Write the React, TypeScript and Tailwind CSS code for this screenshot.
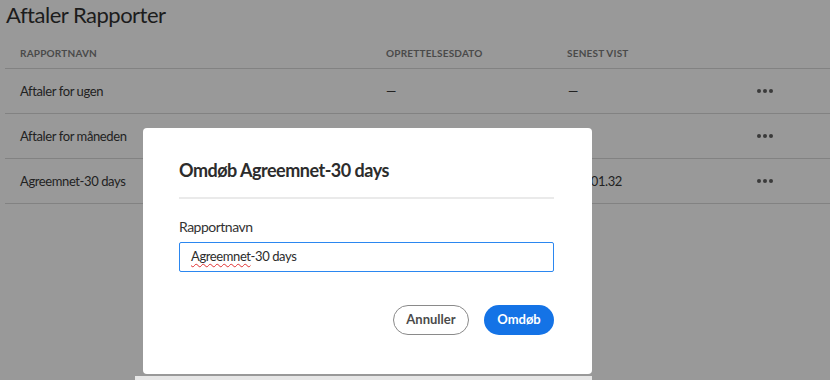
import React from "react";

function Dots() {
  return (
    <div className="flex gap-[2px]">
      <span className="w-[4px] h-[4px] rounded-full bg-[#3a3a3a]" />
      <span className="w-[4px] h-[4px] rounded-full bg-[#3a3a3a]" />
      <span className="w-[4px] h-[4px] rounded-full bg-[#3a3a3a]" />
    </div>
  );
}

function Row({ name, created, seen, seenRight }: { name: string; created: string; seen: string; seenRight?: boolean }) {
  return (
    <div className="h-[45px] flex items-center border-b border-[#828282] text-[13px] text-[#222222] tracking-[-0.4px]">
      <div className="w-[381px] pl-[15px] pt-[2px]">{name}</div>
      <div className="w-[181px] pt-[2px]">{created}</div>
      <div
        className={
          seenRight
            ? "w-[190px] pt-[2px] whitespace-nowrap flex justify-end pr-[135px]"
            : "w-[190px] pl-[1px] pt-[2px] whitespace-nowrap"
        }
      >
        <span className="shrink-0">{seen}</span>
      </div>
      <Dots />
    </div>
  );
}

export default function App() {
  return (
    <div
      className="relative w-[830px] h-[380px] overflow-hidden bg-[#999999]"
      style={{ fontFamily: 'Lato, "Open Sans", sans-serif' }}
    >
      <div className="pl-[5px]">
        <h1 className="text-[22px] leading-[30px] text-[#1c1c1c] pl-[1px] tracking-[-0.5px]">Aftaler Rapporter</h1>
        <div className="mt-[9px] h-[30px] flex items-center border-b border-[#828282] text-[10px] font-bold text-[#4a4a4a] tracking-[0.2px]">
          <div className="w-[381px] pl-[15px]">RAPPORTNAVN</div>
          <div className="w-[181px]">OPRETTELSESDATO</div>
          <div>SENEST VIST</div>
        </div>
        <Row name="Aftaler for ugen" created="—" seen="—" />
        <Row name="Aftaler for måneden" created="" seen="" />
        <Row name="Agreemnet-30 days" created="" seen="19. feb. 2021, 01.32" seenRight />
      </div>

      <div className="absolute left-[135px] top-[376px] w-[457px] h-[4px] bg-[#e6e6e6]" />

      <div className="absolute left-[143px] top-[128px] w-[449px] h-[246px] bg-white rounded-[4px] pl-[36px] pr-[38px] pt-[30px]">
        <h2 className="text-[18px] leading-[24px] font-bold text-[#2c2c2c] tracking-[-0.5px]">Omdøb Agreemnet-30 days</h2>
        <div className="mt-[15px] h-[2px] bg-[#eaeaea]" />
        <div className="mt-[19px] text-[14px] leading-[18px] text-[#333333] tracking-[-0.5px]">Rapportnavn</div>
        <div className="mt-[6px] h-[30px] border border-[#2b87f0] rounded-[2px] flex items-center pl-[11px] text-[13px] text-[#2c2c2c] tracking-[-0.4px]">
          <span className="underline decoration-wavy decoration-[#e03030] decoration-[1px] underline-offset-[2px]">Agreemnet</span>
          <span>-30 days</span>
        </div>
        <div className="mt-[33px] flex justify-end gap-[15px]">
          <button className="h-[30px] w-[76px] rounded-full border border-[#8a8a8a] text-[13px] font-bold text-[#4b4b4b]">Annuller</button>
          <button className="h-[30px] w-[70px] rounded-full bg-[#1473e6] text-[13px] font-bold text-white">Omdøb</button>
        </div>
      </div>
    </div>
  );
}
